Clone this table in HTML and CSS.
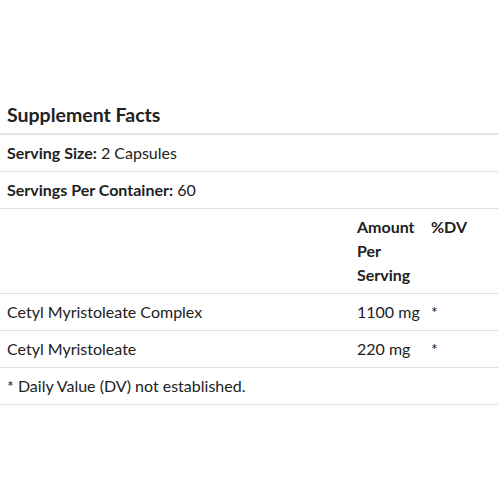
FILE: index.html
```html
<!DOCTYPE html>
<html>
<head>
<meta charset="utf-8">
<link rel="stylesheet" href="styles.css">
</head>
<body>
<div class="facts">
  <h2 class="title">Supplement Facts</h2>
  <table class="tbl">
    <colgroup>
      <col class="c-name">
      <col class="c-amt">
      <col class="c-dv">
    </colgroup>
    <tr><td colspan="3"><b>Serving Size:</b> 2 Capsules</td></tr>
    <tr><td colspan="3"><b>Servings Per Container:</b> 60</td></tr>
    <tr class="head"><td></td><td><b>Amount Per Serving</b></td><td><b>%DV</b></td></tr>
    <tr><td>Cetyl Myristoleate Complex</td><td class="val">1100 mg</td><td>*</td></tr>
    <tr><td>Cetyl Myristoleate</td><td class="val">220 mg</td><td>*</td></tr>
    <tr><td colspan="3">* Daily Value (DV) not established.</td></tr>
  </table>
</div>
</body>
</html>
```
FILE: styles.css
```css
html, body { margin: 0; padding: 0; background: #fff; }
body { font-family: Lato, "Open Sans", sans-serif; color: #222; }
.facts { width: 498px; padding-top: 97px; }
.title {
  margin: 0;
  font-size: 19.5px;
  font-weight: 700;
  line-height: 36px;
  padding: 0 7px;
  border-bottom: 2px solid #e4e4e4;
}
.tbl { width: 498px; border-collapse: collapse; table-layout: fixed; font-size: 16px; }
.c-name { width: 350px; }
.c-amt { width: 74px; }
.c-dv { width: 74px; }
.tbl td {
  padding: 6px 7px;
  line-height: 24px;
  vertical-align: top;
  border-bottom: 1.5px solid #e0e0e0;
}
.tbl .val { white-space: nowrap; }
.tbl b { font-weight: 700; }
```
